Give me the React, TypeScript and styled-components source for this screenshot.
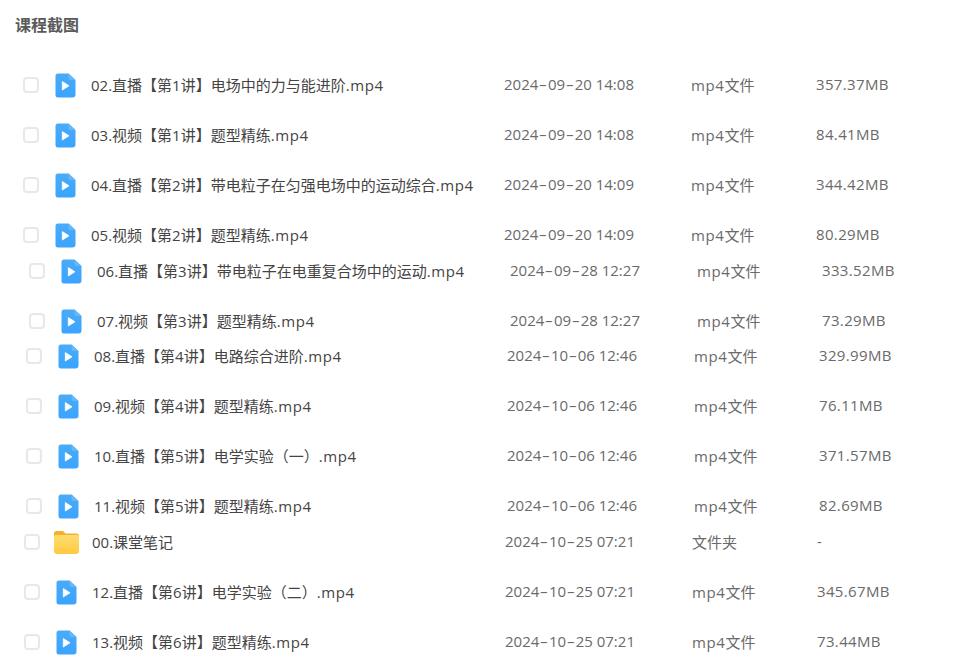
import React from "react";
import styled, { createGlobalStyle } from "styled-components";

const Global = createGlobalStyle`
  html, body { margin: 0; padding: 0; background: #fff; height: 665px; overflow: hidden; }
  body { font-family: "Open Sans", "Noto Sans CJK SC", sans-serif; color: #333; }
`;

const Page = styled.main`
  width: 969px;
  height: 665px;
  overflow: hidden;
`;

const Title = styled.h2`
  margin: 0;
  padding: 13px 0 0 15px;
  height: 60px;
  box-sizing: border-box;
  font-size: 16px;
  line-height: 24px;
  font-weight: 700;
  color: #5a5a5a;
`;

const Group = styled.section<{ $shift: number; $overlap: number }>`
  margin-left: ${(p) => p.$shift}px;
  margin-top: ${(p) => -p.$overlap}px;
`;

const Row = styled.div`
  display: grid;
  grid-template-columns: 32px 36px 413px 187px 125px auto;
  align-items: center;
  height: 50px;
  padding-left: 23px;
`;

const Check = styled.span`
  display: block;
  width: 16px;
  height: 16px;
  box-sizing: border-box;
  border: 2px solid #e8e8e8;
  border-radius: 4px;
  background: #fff;
`;

const IconCell = styled.span`
  display: flex;
  align-items: center;
  height: 26px;
`;

const Name = styled.span`
  padding-bottom: 2px;
  font-size: 15px;
  color: #444;
  white-space: nowrap;
`;

const Meta = styled.span`
  padding-bottom: 2px;
  font-size: 15px;
  color: #6a6a6a;
  white-space: nowrap;
`;

const SizeMeta = styled(Meta)`
  letter-spacing: 0.35px;
`;

const Wide = styled.span`
  letter-spacing: 0.6px;
`;

const Dash = styled.span`
  display: inline-block;
  width: 9.6px;
  text-align: center;
  transform: scaleX(1.7);
`;

const FolderSvg = styled.svg`
  margin-left: -2px;
`;

const VideoIcon = () => (
  <svg width="21" height="25" viewBox="0 0 21 25" aria-hidden="true">
    <defs>
      <linearGradient id="vid" x1="0" y1="0" x2="0" y2="1">
        <stop offset="0" stopColor="#4aabf7" />
        <stop offset="1" stopColor="#3aa4ff" />
      </linearGradient>
    </defs>
    <path d="M3 0.5H13.5L20.5 7V21.5A3 3 0 0 1 17.5 24.5H3A2.5 2.5 0 0 1 0.5 22V3A2.5 2.5 0 0 1 3 0.5Z" fill="url(#vid)" />
    <path d="M13.5 0.5L20.5 7H15.5A2 2 0 0 1 13.5 5Z" fill="#66b8f9" />
    <path d="M7.3 8.6L14 12.8L7.3 17Z" fill="#fff" stroke="#fff" strokeWidth="0.8" strokeLinejoin="round" />
  </svg>
);

const FolderIcon = () => (
  <FolderSvg width="25" height="23" viewBox="0 0 25 23" aria-hidden="true">
    <defs>
      <linearGradient id="fold" x1="0" y1="0" x2="0" y2="1">
        <stop offset="0" stopColor="#ffdc70" />
        <stop offset="1" stopColor="#ffcb3d" />
      </linearGradient>
    </defs>
    <path d="M2.5 0H9L11.5 2.5H22.5A2.5 2.5 0 0 1 25 5V8H0V2.5A2.5 2.5 0 0 1 2.5 0Z" fill="#f4b02a" />
    <path d="M0 6A2 2 0 0 1 2 4H23A2 2 0 0 1 25 6V20A3 3 0 0 1 22 23H3A3 3 0 0 1 0 20Z" fill="url(#fold)" />
  </FolderSvg>
);

const FileName = ({ text }: { text: string }) => {
  const at = text.lastIndexOf(".mp4");
  if (at < 0) return <Name>{text}</Name>;
  return (
    <Name>
      {text.slice(0, at)}
      <Wide>.mp4</Wide>
    </Name>
  );
};

const DateText = ({ text }: { text: string }) => {
  const [y, m, rest] = text.split("-");
  return (
    <Meta>
      {y}
      <Dash>-</Dash>
      {m}
      <Dash>-</Dash>
      {rest}
    </Meta>
  );
};

const TypeText = ({ text }: { text: string }) =>
  text.startsWith("mp4") ? (
    <Meta>
      <Wide>mp4</Wide>
      {text.slice(3)}
    </Meta>
  ) : (
    <Meta>{text}</Meta>
  );

type Item = { name: string; date: string; type: string; size: string; folder?: boolean };

const mp4 = (name: string, date: string, size: string): Item => ({ name, date, type: "mp4文件", size });

const groups: { shift: number; overlap: number; items: Item[] }[] = [
  {
    shift: 0,
    overlap: 0,
    items: [
      mp4("02.直播【第1讲】电场中的力与能进阶.mp4", "2024-09-20 14:08", "357.37MB"),
      mp4("03.视频【第1讲】题型精练.mp4", "2024-09-20 14:08", "84.41MB"),
      mp4("04.直播【第2讲】带电粒子在匀强电场中的运动综合.mp4", "2024-09-20 14:09", "344.42MB"),
      mp4("05.视频【第2讲】题型精练.mp4", "2024-09-20 14:09", "80.29MB"),
    ],
  },
  {
    shift: 6,
    overlap: 14,
    items: [
      mp4("06.直播【第3讲】带电粒子在电重复合场中的运动.mp4", "2024-09-28 12:27", "333.52MB"),
      mp4("07.视频【第3讲】题型精练.mp4", "2024-09-28 12:27", "73.29MB"),
    ],
  },
  {
    shift: 3,
    overlap: 15,
    items: [
      mp4("08.直播【第4讲】电路综合进阶.mp4", "2024-10-06 12:46", "329.99MB"),
      mp4("09.视频【第4讲】题型精练.mp4", "2024-10-06 12:46", "76.11MB"),
      mp4("10.直播【第5讲】电学实验（一）.mp4", "2024-10-06 12:46", "371.57MB"),
      mp4("11.视频【第5讲】题型精练.mp4", "2024-10-06 12:46", "82.69MB"),
    ],
  },
  {
    shift: 1,
    overlap: 14,
    items: [
      { name: "00.课堂笔记", date: "2024-10-25 07:21", type: "文件夹", size: "-", folder: true },
      mp4("12.直播【第6讲】电学实验（二）.mp4", "2024-10-25 07:21", "345.67MB"),
      mp4("13.视频【第6讲】题型精练.mp4", "2024-10-25 07:21", "73.44MB"),
    ],
  },
];

export default function App() {
  return (
    <Page>
      <Global />
      <Title>课程截图</Title>
      {groups.map((g) => (
        <Group key={g.items[0].name} $shift={g.shift} $overlap={g.overlap}>
          {g.items.map((it) => (
            <Row key={it.name}>
              <Check />
              <IconCell>{it.folder ? <FolderIcon /> : <VideoIcon />}</IconCell>
              <FileName text={it.name} />
              <DateText text={it.date} />
              <TypeText text={it.type} />
              <SizeMeta>{it.size}</SizeMeta>
            </Row>
          ))}
        </Group>
      ))}
    </Page>
  );
}
